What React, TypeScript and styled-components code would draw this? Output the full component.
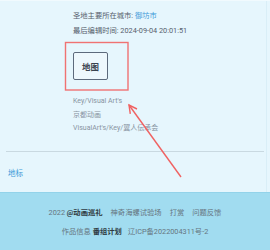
import React from "react";
import styled, { createGlobalStyle } from "styled-components";

const GlobalStyle = createGlobalStyle`
  html, body {
    margin: 0;
    padding: 0;
    background: #e6f6fd;
  }
  body {
    font-family: Roboto, "Noto Sans CJK SC", sans-serif;
  }
`

const Page = styled.div`
  position: relative;
  display: flex;
  flex-direction: column;
  width: 270px;
  height: 250px;
  overflow: hidden;
  background: #e6f6fd;
  border-top: 1px solid #f1fafe;
  box-sizing: border-box;
`
const Content = styled.div`
  display: flex;
  flex-direction: column;
  flex: 1;
  width: 266px;
  border-right: 1px solid #d9eef7;
`
const Info = styled.div`
  display: flex;
  flex-direction: column;
  padding: 7px 0 0 73px;
`
const InfoLine = styled.div`
  font-size: 7.3px;
  line-height: 15px;
  color: #56606c;
  white-space: nowrap;
`
const CityLink = styled.span`
  color: #3c9ad8;
`
const MapButton = styled.button`
  display: flex;
  align-items: center;
  justify-content: center;
  width: 35px;
  height: 28px;
  margin-top: 14px;
  padding: 0;
  background: #eef8fd;
  border: 1px solid #5d6a7c;
  border-radius: 2px;
  font-family: Roboto, "Noto Sans CJK SC", sans-serif;
  font-size: 8.5px;
  font-weight: 700;
  color: #3a4350;
`
const Credits = styled.div`
  display: flex;
  flex-direction: column;
  margin-top: 15px;
`
const CreditLine = styled.div`
  font-size: 7px;
  line-height: 13.5px;
  color: #8894a2;
  white-space: nowrap;
`
const Divider = styled.div`
  height: 1px;
  margin: 15px 2px 0 6px;
  background: #c9d9e1;
`
const Landmark = styled.div`
  display: flex;
  align-items: center;
  flex: 1;
  padding: 2px 0 0 8px;
  font-size: 7.5px;
  color: #3c9ad8;
`
const Footer = styled.footer`
  display: flex;
  flex-direction: column;
  align-items: center;
  gap: 8px;
  height: 58px;
  padding-top: 14px;
  box-sizing: border-box;
  background: #a1dcf0;
  border-top: 1px solid #93d3ea;
`
const FooterRow = styled.div<{ $gap: number }>`
  display: flex;
  gap: ${p => p.$gap}px;
  font-size: 7.3px;
  line-height: 11px;
  color: #66757f;
  white-space: nowrap;
`
const Strong = styled.b`
  color: #2f3a42;
  font-weight: 700;
`
const Annotation = styled.svg`
  position: absolute;
  left: 0;
  top: 0;
  pointer-events: none;
`

export default function App() {
  return (
    <>
      <GlobalStyle />
      <Page>
        <Content>
          <Info>
            <InfoLine>圣地主要所在城市: <CityLink>御坊市</CityLink></InfoLine>
            <InfoLine>最后编辑时间: 2024-09-04 20:01:51</InfoLine>
            <MapButton>地图</MapButton>
            <Credits>
              <CreditLine>Key/Visual Art's</CreditLine>
              <CreditLine>京都动画</CreditLine>
              <CreditLine>VisualArt's/Key/翼人伝承会</CreditLine>
            </Credits>
          </Info>
          <Divider />
          <Landmark>地标</Landmark>
        </Content>
        <Footer>
          <FooterRow $gap={8}>
            <span>2022 <Strong>@动画巡礼</Strong></span>
            <span>神奇海螺试验场</span>
            <span>打赏</span>
            <span>问题反馈</span>
          </FooterRow>
          <FooterRow $gap={6}>
            <span>作品信息 <Strong>番组计划</Strong></span>
            <span>辽ICP备2022004311号-2</span>
          </FooterRow>
        </Footer>
        <Annotation width="270" height="250" viewBox="0 0 270 250">
          <rect x="65.5" y="41.5" width="62.5" height="47.5" fill="none" stroke="#f07272" strokeWidth="1.4" />
          <line x1="181" y1="176" x2="129" y2="104" stroke="#f06262" strokeWidth="1.4" />
          <polyline points="137,108 129,104 130.3,112.8" fill="none" stroke="#f06262" strokeWidth="1.4" />
        </Annotation>
      </Page>
    </>
  )
}
